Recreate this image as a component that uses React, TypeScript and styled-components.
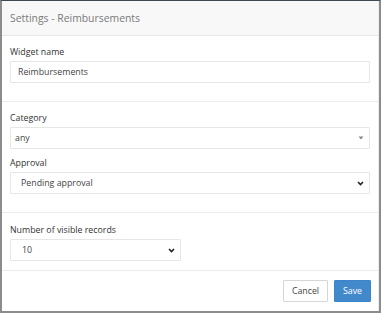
import React from "react";
import styled, { createGlobalStyle } from "styled-components";

const Global = createGlobalStyle`
  html, body { margin: 0; padding: 0; background: #ffffff; }
  body { font-family: "Open Sans", "Noto Sans", sans-serif; }
  * { box-sizing: border-box; }
`;

const Frame = styled.div`
  width: 381px;
  height: 313px;
  border-top: 1px solid #3e4a58;
  border-left: 2px solid #8c8c8c;
  border-right: 2px solid #8c8c8c;
  border-bottom: 2px solid #8c8c8c;
  background: #fff;
  display: flex;
  flex-direction: column;
`;

const Dialog = styled.div`
  flex: 1;
  display: flex;
  flex-direction: column;
  border-right: 1px solid #eeeeee;
`;

const Header = styled.div`
  height: 35px;
  background: #f8f8f8;
  border-bottom: 1px solid #e8e8e8;
  display: flex;
  align-items: center;
  padding: 0 8px;
`;

const Title = styled.h4`
  margin: 0;
  font-size: 10.4px;
  font-weight: 400;
  color: #7a7a7a;
`;

const Section = styled.div<{ $pt: number; $pb: number }>`
  padding: ${(p) => p.$pt}px 8px ${(p) => p.$pb}px;
  border-bottom: 1px solid #ececec;
  display: flex;
  flex-direction: column;
`;

const Group = styled.div<{ $mt?: number }>`
  display: flex;
  flex-direction: column;
  margin-top: ${(p) => p.$mt ?? 0}px;
`;

const Label = styled.label`
  font-size: 8.8px;
  line-height: 16px;
  color: #333;
  margin-bottom: 1px;
`;

const fieldBase = `
  height: 22px;
  border: 1px solid #e6e6e6;
  background: #fff;
  font-family: "Open Sans", "Noto Sans", sans-serif;
  font-size: 8.8px;
  color: #444;
  border-radius: 1px;
`;

const Input = styled.input<{ $w?: number }>`
  ${fieldBase}
  width: ${(p) => (p.$w ? `${p.$w}px` : "100%")};
  padding: 0 7px;
  outline: none;
`;

const SelectBox = styled.div<{ $w?: number }>`
  ${fieldBase}
  width: ${(p) => (p.$w ? `${p.$w}px` : "100%")};
  display: flex;
  align-items: center;
  justify-content: space-between;
  padding: 0 5px 0 3px;
`;

const Value = styled.span<{ $indent?: number }>`
  padding-left: ${(p) => p.$indent ?? 0}px;
`;

const Footer = styled.div`
  flex: 1;
  display: flex;
  justify-content: flex-end;
  align-items: flex-start;
  padding: 9px 7px 0;
  gap: 6px;
`;

const Button = styled.button<{ $primary?: boolean; $w: number }>`
  width: ${(p) => p.$w}px;
  height: 22px;
  padding: 0;
  font-family: "Open Sans", "Noto Sans", sans-serif;
  font-size: 8.8px;
  border-radius: 1px;
  border: 1px solid ${(p) => (p.$primary ? "#3a84c9" : "#d6d6d6")};
  background: ${(p) => (p.$primary ? "#4289cc" : "#fff")};
  color: ${(p) => (p.$primary ? "#fff" : "#444")};
`;

const Caret = () => (
  <svg width="6" height="4" viewBox="0 0 6 4">
    <path d="M0.5 0.5 L5.5 0.5 L3 3.5 Z" fill="#888" />
  </svg>
);

const Chevron = () => (
  <svg width="7" height="5" viewBox="0 0 7 5">
    <path d="M1 1 L3.5 3.5 L6 1" stroke="#222" strokeWidth="1.6" fill="none" />
  </svg>
);

export default function App() {
  return (
    <>
      <Global />
      <Frame>
        <Dialog>
          <Header>
            <Title>Settings - Reimbursements</Title>
          </Header>
          <Section $pt={8} $pb={18}>
            <Group>
              <Label>Widget name</Label>
              <Input defaultValue="Reimbursements" />
            </Group>
          </Section>
          <Section $pt={8} $pb={18}>
            <Group>
              <Label>Category</Label>
              <SelectBox>
                <Value $indent={1}>any</Value>
                <Caret />
              </SelectBox>
            </Group>
            <Group $mt={6}>
              <Label>Approval</Label>
              <SelectBox>
                <Value $indent={7}>Pending approval</Value>
                <Chevron />
              </SelectBox>
            </Group>
          </Section>
          <Section $pt={9} $pb={9}>
            <Group>
              <Label>Number of visible records</Label>
              <SelectBox $w={171}>
                <Value $indent={8}>10</Value>
                <Chevron />
              </SelectBox>
            </Group>
          </Section>
          <Footer>
            <Button $w={45}>Cancel</Button>
            <Button $w={37} $primary>Save</Button>
          </Footer>
        </Dialog>
      </Frame>
    </>
  );
}
